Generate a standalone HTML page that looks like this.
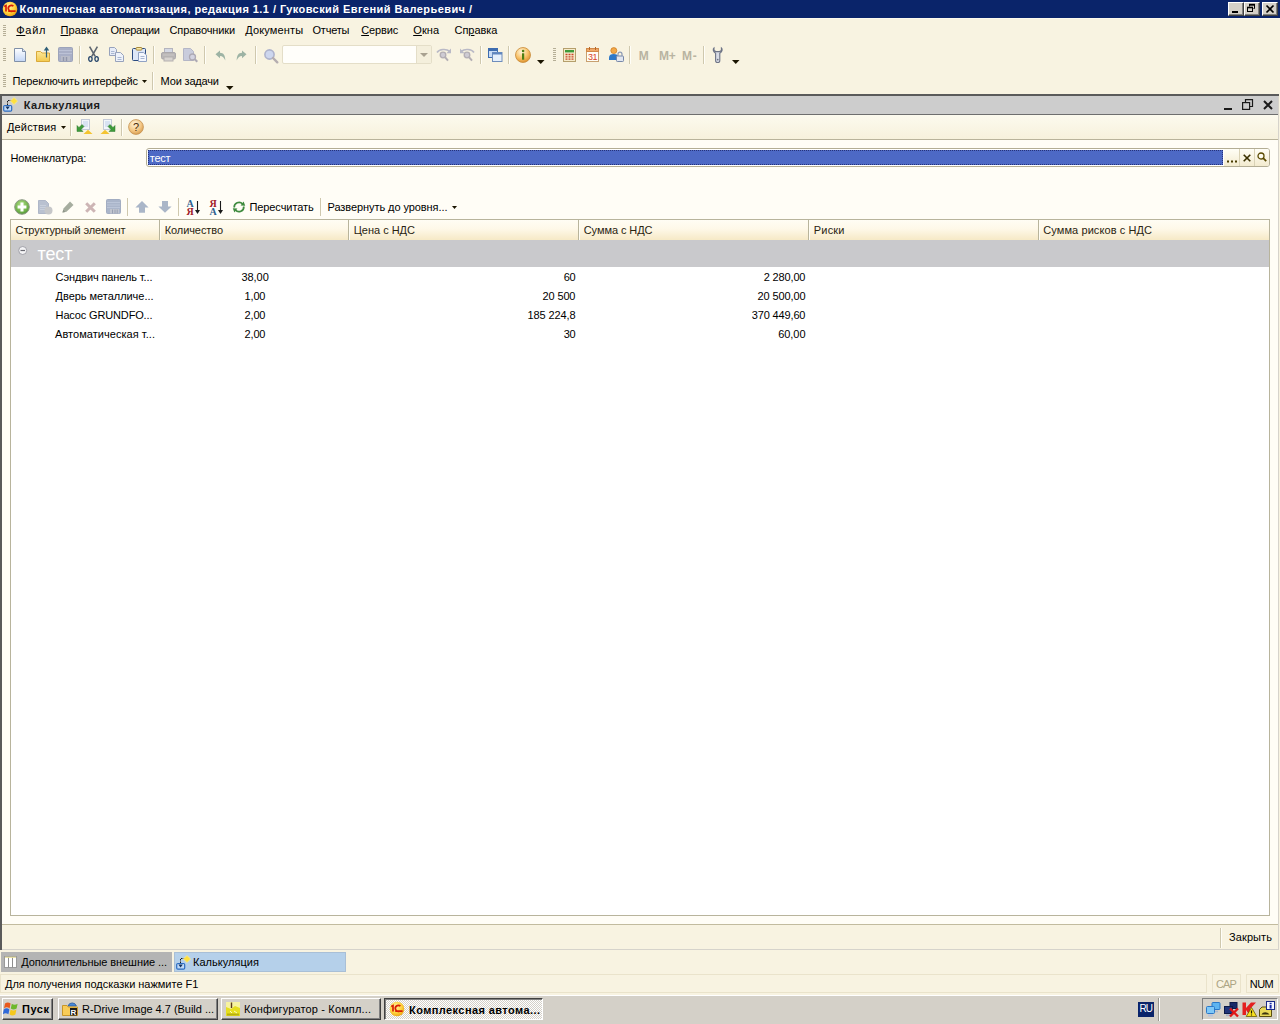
<!DOCTYPE html>
<html lang="ru">
<head>
<meta charset="utf-8">
<title>Комплексная автоматизация, редакция 1.1</title>
<style>
html,body{margin:0;padding:0;}
body{width:1280px;height:1024px;overflow:hidden;position:relative;background:#F8F3E1;
 font-family:"Liberation Sans","DejaVu Sans",sans-serif;font-size:11px;color:#000;}
.a{position:absolute;}
.t{position:absolute;white-space:nowrap;line-height:14px;height:14px;font-size:11px;}
.t u{text-decoration:underline;text-underline-offset:1px;}
.b{font-weight:bold;}
.g{font-size:18px;line-height:22px;height:22px;}
svg{position:absolute;overflow:visible;}
.wb{position:absolute;top:2px;width:16px;height:14px;background:#D4D0C8;box-sizing:border-box;
 border:1px solid;border-color:#fff #404040 #404040 #fff;box-shadow:inset -1px -1px 0 #808080;}
.grip{position:absolute;width:3px;background:repeating-linear-gradient(to bottom,#B5AE96 0,#B5AE96 1px,transparent 1px,transparent 2px);}
.sep{position:absolute;width:1px;background:#CFC8AE;box-shadow:1px 0 0 #FFFEF8;}
.tb{position:absolute;top:998px;height:22px;box-sizing:border-box;background:#D4D0C8;border:1px solid;border-color:#fff #404040 #404040 #fff;box-shadow:inset -1px -1px 0 #808080;}
.hsep{position:absolute;top:220px;width:1px;height:20px;background:#B8B49C;box-shadow:1px 0 0 #FFFDF3;}
</style>
</head>
<body>
<!-- main title bar -->
<div class="a" style="left:0;top:0;width:1280px;height:18px;background:#0A246A"></div>
<div class="a" style="left:0;top:18px;width:1280px;height:1px;background:#FCFAEE"></div>
<div class="wb" style="left:1228px"></div>
<div class="wb" style="left:1244px"></div>
<div class="wb" style="left:1262px"></div>
<!-- toolbar grips / separators -->
<div class="grip" style="left:3px;top:25px;height:12px"></div>
<div class="grip" style="left:3px;top:48px;height:13px"></div>
<div class="grip" style="left:3px;top:74px;height:13px"></div>
<div class="grip" style="left:553px;top:48px;height:13px"></div>
<div class="sep" style="left:79px;top:46px;height:18px"></div>
<div class="sep" style="left:153px;top:46px;height:18px"></div>
<div class="sep" style="left:204px;top:46px;height:18px"></div>
<div class="sep" style="left:255px;top:46px;height:18px"></div>
<div class="sep" style="left:480px;top:46px;height:18px"></div>
<div class="sep" style="left:508px;top:46px;height:18px"></div>
<div class="sep" style="left:629px;top:46px;height:18px"></div>
<div class="sep" style="left:703px;top:46px;height:18px"></div>
<div class="sep" style="left:152px;top:72px;height:18px"></div>
<!-- search combo -->
<div class="a" style="left:282px;top:45px;width:150px;height:19px;box-sizing:border-box;background:#FFFEFA;border:1px solid #E4DEC8;border-radius:2px"></div>
<div class="a" style="left:416px;top:46px;width:15px;height:17px;background:#F4EFDC;border-left:1px solid #E4DEC8;box-sizing:border-box"></div>
<!-- child window -->
<div class="a" style="left:0;top:94px;width:1279px;height:856px;background:#5A5A5A"></div>
<div class="a" style="left:2px;top:96px;width:1277px;height:854px;background:#D6D3CB"></div>
<div class="a" style="left:2px;top:96px;width:1276px;height:18px;background:#CDCDCD"></div>
<div class="a" style="left:2px;top:114px;width:1276px;height:1px;background:#6E6E6E"></div>
<div class="a" style="left:2px;top:115px;width:1276px;height:24px;background:linear-gradient(#FCFAEE,#F7F1DC)"></div>
<div class="a" style="left:2px;top:139px;width:1276px;height:1px;background:#B9B39B"></div>
<div class="a" style="left:2px;top:140px;width:1276px;height:784px;background:#FFFDF6"></div>
<div class="a" style="left:2px;top:924px;width:1276px;height:1px;background:#C2BB9E"></div>
<div class="a" style="left:2px;top:925px;width:1276px;height:24px;background:#F8F3E1"></div>
<div class="sep" style="left:70px;top:119px;height:17px"></div>
<div class="sep" style="left:121px;top:119px;height:17px"></div>
<div class="sep" style="left:1220px;top:928px;height:20px"></div>
<!-- field -->
<div class="a" style="left:146px;top:148px;width:1124px;height:19px;box-sizing:border-box;border:1px solid #B3AD94;border-radius:3px;background:#FFFFFF"></div>
<div class="a" style="left:148px;top:150px;width:1075px;height:15px;background:#4D69C5;outline:1px dotted #26327A;outline-offset:-1px"></div>
<div class="a" style="left:1224px;top:149px;width:45px;height:17px;background:linear-gradient(#FFFEF6,#F3EBCF);border-radius:0 2px 2px 0"></div>
<div class="a" style="left:1239px;top:149px;width:1px;height:17px;background:#D9D2B6"></div>
<div class="a" style="left:1254px;top:149px;width:1px;height:17px;background:#D9D2B6"></div>
<!-- table toolbar seps -->
<div class="sep" style="left:127px;top:198px;height:18px"></div>
<div class="sep" style="left:178px;top:198px;height:18px"></div>
<div class="sep" style="left:320px;top:198px;height:18px"></div>
<!-- table -->
<div class="a" style="left:10px;top:219px;width:1260px;height:697px;box-sizing:border-box;border:1px solid #B8B49C;background:#FFFFFF"></div>
<div class="a" style="left:11px;top:220px;width:1258px;height:20px;background:linear-gradient(#FFFDF4 0%,#FEF8E8 45%,#F6E9C6 100%)"></div>
<div class="hsep" style="left:159px"></div>
<div class="hsep" style="left:348px"></div>
<div class="hsep" style="left:578px"></div>
<div class="hsep" style="left:808px"></div>
<div class="hsep" style="left:1038px"></div>
<div class="a" style="left:11px;top:240px;width:1258px;height:27px;background:#C9C9CC"></div>
<!-- window tabs -->
<div class="a" style="left:1px;top:952px;width:171px;height:20px;background:#B4B4B4"></div>
<div class="a" style="left:174px;top:952px;width:172px;height:20px;background:#B5D0EA;box-sizing:border-box;border:1px solid #A9BFD6"></div>
<!-- status bar -->
<div class="a" style="left:0;top:974px;width:1207px;height:19px;box-sizing:border-box;border:1px solid #EAE3CB"></div>
<div class="a" style="left:1212px;top:974px;width:29px;height:19px;box-sizing:border-box;border:1px solid #EAE3CB"></div>
<div class="a" style="left:1246px;top:974px;width:33px;height:19px;box-sizing:border-box;border:1px solid #EAE3CB"></div>
<!-- taskbar -->
<div class="a" style="left:0;top:995px;width:1280px;height:1px;background:#FFFFFF"></div>
<div class="a" style="left:0;top:996px;width:1280px;height:28px;background:#D4D0C8"></div>
<div class="tb" style="left:2px;width:51px"></div>
<div class="tb" style="left:58px;width:160px"></div>
<div class="tb" style="left:221px;width:160px"></div>
<div class="tb" style="left:384px;width:159px;border-color:#404040 #fff #fff #404040;box-shadow:inset 1px 1px 0 #808080;background:repeating-conic-gradient(#fff 0% 25%,#D4D0C8 0% 50%) 0 0/2px 2px"></div>
<div class="a" style="left:1138px;top:1002px;width:16px;height:15px;background:#0A246A"></div>
<div class="a" style="left:1158px;top:998px;width:1px;height:23px;background:#9A9890;box-shadow:1px 0 0 #fff"></div>
<div class="a" style="left:1202px;top:998px;width:76px;height:22px;box-sizing:border-box;border:1px solid;border-color:#808080 #fff #fff #808080"></div>

<div class="t b" id="ttl" style="left:19.5px;top:2px;letter-spacing:0.439px;color:#fff;">Комплексная автоматизация, редакция 1.1 / Гуковский Евгений Валерьевич /</div>
<div class="t" id="m1" style="left:16.25px;top:23px;letter-spacing:0.729px;"><u>Ф</u>айл</div>
<div class="t" id="m2" style="left:60.5px;top:23px;letter-spacing:0.066px;"><u>П</u>равка</div>
<div class="t" id="m3" style="left:110.5px;top:23px;letter-spacing:-0.281px;">Операции</div>
<div class="t" id="m4" style="left:169.5px;top:23px;letter-spacing:-0.094px;">Справочники</div>
<div class="t" id="m5" style="left:245.2px;top:23px;letter-spacing:0.162px;">Документы</div>
<div class="t" id="m6" style="left:312.5px;top:23px;letter-spacing:-0.206px;">Отчеты</div>
<div class="t" id="m7" style="left:361.2px;top:23px;letter-spacing:-0.138px;"><u>С</u>ервис</div>
<div class="t" id="m8" style="left:413.2px;top:23px;letter-spacing:0.141px;"><u>О</u>кна</div>
<div class="t" id="m9" style="left:454.5px;top:23px;letter-spacing:-0.029px;">Сп<u>р</u>авка</div>
<div class="t" id="tb2a" style="left:12.5px;top:74px;letter-spacing:-0.101px;">Переключить интерфейс</div>
<div class="t" id="tb2b" style="left:160.6px;top:74px;letter-spacing:-0.171px;">Мои задачи</div>
<div class="t b" id="cwt1" style="left:23.75px;top:98px;letter-spacing:0.470px;color:#1c1c1c;">Калькуляция</div>
<div class="t" id="act" style="left:7px;top:120px;letter-spacing:0.150px;">Действия</div>
<div class="t" id="nom" style="left:10.5px;top:151px;letter-spacing:-0.095px;">Номенклатура:</div>
<div class="t" id="fld" style="left:149.75px;top:151px;letter-spacing:-0.243px;color:#fff;">тест</div>
<div class="t" id="rec" style="left:249.4px;top:200px;letter-spacing:-0.073px;">Пересчитать</div>
<div class="t" id="raz" style="left:327.5px;top:200px;letter-spacing:-0.074px;">Развернуть до уровня...</div>
<div class="t" id="h1" style="left:15.6px;top:223px;letter-spacing:-0.109px;color:#2a2410;">Структурный элемент</div>
<div class="t" id="h2" style="left:164.75px;top:223px;letter-spacing:-0.092px;color:#2a2410;">Количество</div>
<div class="t" id="h3" style="left:353.75px;top:223px;letter-spacing:-0.017px;color:#2a2410;">Цена с НДС</div>
<div class="t" id="h4" style="left:583.75px;top:223px;letter-spacing:-0.077px;color:#2a2410;">Сумма с НДС</div>
<div class="t" id="h5" style="left:813.75px;top:223px;letter-spacing:0.199px;color:#2a2410;">Риски</div>
<div class="t" id="h6" style="left:1043.3px;top:223px;letter-spacing:0.086px;color:#2a2410;">Сумма рисков с НДС</div>
<div class="t g" id="grp" style="left:37.5px;top:243px;letter-spacing:-0.099px;color:#fff;">тест</div>
<div class="t" id="r0a" style="left:55.6px;top:270px;letter-spacing:-0.112px;">Сэндвич панель т...</div>
<div class="t" id="r0b" style="left:241.5px;top:270px;letter-spacing:-0.070px;">38,00</div>
<div class="t" id="r0c" style="left:563.75px;top:270px;letter-spacing:-0.300px;">60</div>
<div class="t" id="r0d" style="left:763.75px;top:270px;letter-spacing:-0.154px;">2 280,00</div>
<div class="t" id="r1a" style="left:55.6px;top:289px;letter-spacing:-0.038px;">Дверь металличе...</div>
<div class="t" id="r1b" style="left:244.5px;top:289px;letter-spacing:-0.141px;">1,00</div>
<div class="t" id="r1c" style="left:542.5px;top:289px;letter-spacing:-0.131px;">20 500</div>
<div class="t" id="r1d" style="left:757.5px;top:289px;letter-spacing:-0.117px;">20 500,00</div>
<div class="t" id="r2a" style="left:55.6px;top:308px;letter-spacing:-0.149px;">Насос GRUNDFO...</div>
<div class="t" id="r2b" style="left:244.5px;top:308px;letter-spacing:-0.141px;">2,00</div>
<div class="t" id="r2c" style="left:527.5px;top:308px;letter-spacing:-0.117px;">185 224,8</div>
<div class="t" id="r2d" style="left:751.75px;top:308px;letter-spacing:-0.146px;">370 449,60</div>
<div class="t" id="r3a" style="left:55px;top:327px;letter-spacing:0.049px;">Автоматическая т...</div>
<div class="t" id="r3b" style="left:244.5px;top:327px;letter-spacing:-0.141px;">2,00</div>
<div class="t" id="r3c" style="left:563.75px;top:327px;letter-spacing:-0.300px;">30</div>
<div class="t" id="r3d" style="left:778.25px;top:327px;letter-spacing:-0.070px;">60,00</div>
<div class="t" id="cls" style="left:1229px;top:930px;letter-spacing:0.104px;">Закрыть</div>
<div class="t" id="tab1" style="left:21.25px;top:955px;letter-spacing:-0.072px;">Дополнительные внешние ...</div>
<div class="t" id="tab2" style="left:193px;top:955px;letter-spacing:0.034px;">Калькуляция</div>
<div class="t" id="sts" style="left:5px;top:977px;letter-spacing:-0.011px;">Для получения подсказки нажмите F1</div>
<div class="t" id="cap" style="left:1216px;top:977px;letter-spacing:-0.900px;color:#ADA584;">CAP</div>
<div class="t" id="num" style="left:1249.7px;top:977px;letter-spacing:-0.500px;">NUM</div>
<div class="t b" id="pusk" style="left:22px;top:1002px;letter-spacing:0.542px;">Пуск</div>
<div class="t" id="tk1" style="left:82px;top:1002px;letter-spacing:-0.024px;">R-Drive Image 4.7 (Build ...</div>
<div class="t" id="tk2" style="left:244px;top:1002px;letter-spacing:0.148px;">Конфигуратор - Компл...</div>
<div class="t b" id="tk3" style="left:409px;top:1003px;letter-spacing:0.421px;">Комплексная автома...</div>
<div class="t" id="ru" style="left:1139.5px;top:1002px;letter-spacing:-1.000px;color:#fff;font-size:10px;">RU</div>
<div class="t b" id="mm1" style="left:638.75px;top:49px;letter-spacing:0.000px;color:#B9B4A2;font-size:12px;">M</div>
<div class="t b" id="mm2" style="left:659px;top:49px;letter-spacing:-0.300px;color:#B9B4A2;font-size:12px;">M+</div>
<div class="t b" id="mm3" style="left:682px;top:49px;letter-spacing:0.750px;color:#B9B4A2;font-size:12px;">M-</div>
<svg style="left:2px;top:1px" width="16" height="16" viewBox="0 0 16 16" ><defs><radialGradient id="lg2" cx="40%" cy="35%" r="70%"><stop offset="0" stop-color="#FFF3A0"/><stop offset="0.6" stop-color="#FFD23C"/><stop offset="1" stop-color="#E8A010"/></radialGradient></defs><circle cx="8" cy="8" r="7.3" fill="url(#lg2)"/><path d="M2.2 5.6 L4 4.6 V10.6 M6.2 10.2 H13.6 M11.4 5.2 A3 3 0 1 0 10.4 10.2" fill="none" stroke="#D81E05" stroke-width="1.7"/></svg>
<svg style="left:1228px;top:2px" width="16" height="14" viewBox="0 0 16 14" ><rect x="4" y="9" width="6" height="2" fill="#000"/></svg>
<svg style="left:1244px;top:2px" width="16" height="14" viewBox="0 0 16 14" ><path d="M5.5 2.5h5v4h-1 M5.5 2.5v2 M5.5 3h5" fill="none" stroke="#000" stroke-width="1"/><rect x="3.5" y="5.5" width="5" height="4" fill="none" stroke="#000"/><path d="M3 5.5h6" stroke="#000" stroke-width="1.6"/><path d="M5 2.6h6" stroke="#000" stroke-width="1.6"/></svg>
<svg style="left:1262px;top:2px" width="16" height="14" viewBox="0 0 16 14" ><path d="M4.5 3.5l7 7M11.5 3.5l-7 7" stroke="#000" stroke-width="1.7" fill="none"/></svg>
<svg style="left:14px;top:48px" width="12" height="14" viewBox="0 0 12 14" ><defs><linearGradient id="nd" x1="0" y1="0" x2="0" y2="1"><stop offset="0" stop-color="#FFFFFF"/><stop offset="1" stop-color="#C3D6F6"/></linearGradient></defs><path d="M0.5 0.5H8.5L11.5 3.5V13.5H0.5Z" fill="url(#nd)" stroke="#8090A8"/><path d="M8.5 0.5V3.5H11.5" fill="#DCE6F5" stroke="#8090A8"/></svg>
<svg style="left:36px;top:46px" width="15" height="16" viewBox="0 0 15 16" ><defs><linearGradient id="fo" x1="0" y1="0" x2="0" y2="1"><stop offset="0" stop-color="#FCE89A"/><stop offset="1" stop-color="#F3C94E"/></linearGradient></defs><path d="M0.5 5.5H4.5L6 7H13.5V15.5H0.5Z" fill="url(#fo)" stroke="#D9A93A"/><path d="M10.5 11.5V2.5" stroke="#2F5E78" stroke-width="1.2"/><path d="M7.8 4.4L10.5 0.6L13.2 4.4Z" fill="#2F5E78"/></svg>
<svg style="left:58px;top:47px" width="15" height="15" viewBox="0 0 15 15" ><rect x="0.5" y="0.5" width="14" height="14" rx="1" fill="#A9AFC6" stroke="#9CA3BA"/><path d="M1 3.5h13M1 6.5h13" stroke="#BCC2D6"/><rect x="3" y="9" width="9" height="5" fill="#B9BCC8"/><path d="M5.5 10v4M8.5 10v4" stroke="#9297AA" stroke-width="1.4"/></svg>
<svg style="left:88px;top:46px" width="11" height="16" viewBox="0 0 11 16" ><path d="M1.6 0.6L7.2 10.4M9.4 0.6L3.8 10.4" stroke="#5E6670" stroke-width="1.6" fill="none"/><ellipse cx="2.4" cy="13" rx="1.7" ry="2.3" fill="none" stroke="#24446A" stroke-width="1.3"/><ellipse cx="8.6" cy="13" rx="1.7" ry="2.3" fill="none" stroke="#24446A" stroke-width="1.3"/></svg>
<svg style="left:109px;top:47px" width="15" height="15" viewBox="0 0 15 15" ><path d="M0.5 0.5H5.5L7.5 2.5V8.5H0.5Z" fill="#E7ECF7" stroke="#97A2BC"/><path d="M6.5 5.5H11.5L14.5 8.5V14.5H6.5Z" fill="#EEF2FA" stroke="#97A2BC"/><path d="M8.5 10.5h4M8.5 12.5h4M2 4.5h3.5M2 6.5h3.5" stroke="#A9B7D2"/></svg>
<svg style="left:132px;top:47px" width="15" height="15" viewBox="0 0 15 15" ><rect x="0.5" y="1.5" width="13" height="12" rx="1" fill="#DDE7F7" stroke="#2A4A80"/><rect x="4" y="0.5" width="6" height="2.6" rx="1" fill="#F6E7A8" stroke="#A98A3C"/><path d="M6.5 5.5H11.5L14.5 8V14.5H6.5Z" fill="#F4F7FD" stroke="#90A2C4"/><path d="M8.5 9.5h4M8.5 11.5h4" stroke="#A9B7D2"/></svg>
<svg style="left:161px;top:48px" width="15" height="14" viewBox="0 0 15 14" ><rect x="3.5" y="0.5" width="8" height="5" fill="#D4D8E4" stroke="#B4B4BE"/><rect x="0.5" y="4.5" width="14" height="6.5" rx="1.5" fill="#B9B6B6" stroke="#ABA8AC"/><rect x="3" y="9" width="9" height="4" fill="#D7D3D0" stroke="#B4B0B0"/><path d="M2 7h11" stroke="#CAC6C6"/></svg>
<svg style="left:183px;top:48px" width="15" height="15" viewBox="0 0 15 15" ><path d="M0.5 0.5H7.5L10.5 3.5V12.5H0.5Z" fill="#C9CCDC" stroke="#B4B6C6"/><circle cx="9.5" cy="9" r="3" fill="#D2D2E0" stroke="#ADA9B4" stroke-width="1.3"/><path d="M11.8 11.2L14.3 13.8" stroke="#ADA9B4" stroke-width="2"/></svg>
<svg style="left:215px;top:50px" width="11" height="11" viewBox="0 0 11 11" ><path d="M0.5 4.2L5 0.4V2.8C8.5 2.8 10.3 5.5 10.3 10.6C9.2 7.8 7.6 6 5 6V8.2Z" fill="#9DB3A4"/></svg>
<svg style="left:235.5px;top:50px" width="11" height="11" viewBox="0 0 11 11" ><path d="M10.5 4.2L6 0.4V2.8C2.5 2.8 0.7 5.5 0.7 10.6C1.8 7.8 3.4 6 6 6V8.2Z" fill="#9DB3A4"/></svg>
<svg style="left:263px;top:48px" width="16" height="16" viewBox="0 0 16 16" ><circle cx="6.5" cy="6.5" r="4.6" fill="#CDD6EE" stroke="#AEB3CC" stroke-width="1.6"/><path d="M10 10L14.3 14.3" stroke="#B5ADB0" stroke-width="2.4" stroke-linecap="round"/></svg>
<svg style="left:420px;top:53px" width="8" height="4" viewBox="0 0 8 4" ><path d="M0 0H8L4.0 4Z" fill="#A8A190"/></svg>
<svg style="left:436px;top:48px" width="16" height="14" viewBox="0 0 16 14" ><path d="M1 4.5C3.5 0.8 10.5 0.6 13.5 3.2" fill="none" stroke="#B9B9C6" stroke-width="1.6"/><path d="M15 0.6V5.2H10.4Z" fill="#B9B9C6"/><circle cx="7" cy="7" r="2.8" fill="#CECBD3" stroke="#B3AEB4" stroke-width="1.3"/><path d="M9 9.2L12 12.6" stroke="#B3AEB4" stroke-width="2"/></svg>
<svg style="left:459px;top:48px" width="16" height="14" viewBox="0 0 16 14" ><path d="M15 4.5C12.5 0.8 5.5 0.6 2.5 3.2" fill="none" stroke="#B9B9C6" stroke-width="1.6"/><path d="M1 0.6V5.2H5.6Z" fill="#B9B9C6"/><circle cx="8" cy="7" r="2.8" fill="#CECBD3" stroke="#B3AEB4" stroke-width="1.3"/><path d="M10 9.2L13 12.6" stroke="#B3AEB4" stroke-width="2"/></svg>
<svg style="left:488px;top:48px" width="15" height="14" viewBox="0 0 15 14" ><rect x="0.5" y="0.5" width="9" height="9" fill="#C9DCF5" stroke="#3E6DB0"/><rect x="0.5" y="0.5" width="9" height="2.5" fill="#3E6DB0"/><rect x="4.5" y="4.5" width="9.5" height="9" fill="#E5EFFB" stroke="#6E8DBC"/><rect x="4.5" y="4.5" width="9.5" height="2" fill="#5E86C0"/></svg>
<svg style="left:515px;top:47px" width="16" height="16" viewBox="0 0 16 16" ><defs><radialGradient id="ig" cx="40%" cy="30%" r="75%"><stop offset="0" stop-color="#FFF6DC"/><stop offset="0.55" stop-color="#F9C36A"/><stop offset="1" stop-color="#D98C28"/></radialGradient></defs><circle cx="8" cy="8" r="7.5" fill="url(#ig)" stroke="#C88A38" stroke-width="0.8"/><rect x="7" y="6.3" width="2.2" height="6.4" fill="#4D7F14"/><circle cx="8.1" cy="4" r="1.3" fill="#4D7F14"/></svg>
<svg style="left:537px;top:60px" width="7.5" height="4" viewBox="0 0 7.5 4" ><path d="M0 0H7.5L3.75 4Z" fill="#1A1400"/></svg>
<svg style="left:563px;top:48px" width="13" height="14" viewBox="0 0 13 14" ><rect x="0.5" y="0.5" width="12" height="13" fill="#F6EBCB" stroke="#B59F6C"/><rect x="2" y="2" width="9" height="2.4" fill="#3E9A3A"/><path d="M2.5 6.5h2M5.5 6.5h2M8.5 6.5h2M2.5 8.8h2M5.5 8.8h2M8.5 8.8h2M2.5 11.1h2M5.5 11.1h2M8.5 11.1h2" stroke="#C8452A" stroke-width="1.3"/></svg>
<svg style="left:586px;top:47px" width="13" height="15" viewBox="0 0 13 15" ><rect x="0.5" y="1.5" width="12" height="13" fill="#FFFDF6" stroke="#C8A070"/><rect x="0.5" y="1.5" width="12" height="3" fill="#F0A868" stroke="#D08848"/><path d="M3.5 0v3M9.5 0v3" stroke="#B86828"/><text x="6.6" y="13" font-family="Liberation Sans,sans-serif" font-size="9" fill="#D8402A" text-anchor="middle" letter-spacing="-0.3">31</text></svg>
<svg style="left:609px;top:47px" width="15" height="15" viewBox="0 0 15 15" ><circle cx="4.8" cy="3.6" r="3" fill="#F2A848" stroke="#C87820" stroke-width="0.7"/><path d="M0 13V10.5C0 8 2 7 4.8 7C7 7 8.5 7.8 9 9V13Z" fill="#2E78C8"/><rect x="7.5" y="9" width="7" height="5.5" rx="0.8" fill="#E1E6F0" stroke="#7888A8"/><path d="M9 9V7.2A2 2 0 0 1 13 7.2V9" fill="none" stroke="#8A98B4" stroke-width="1.2"/></svg>
<svg style="left:712px;top:47px" width="12" height="16" viewBox="0 0 12 16" ><path d="M2 0.8C0.8 1.8 0.8 4.6 3.6 6.2V13.4A2 2 0 0 0 7.8 13.4V6.2C10.6 4.6 10.6 1.8 9.4 0.8V3.6L7.6 4.6H3.8L2 3.6Z" fill="#D9DCE6" stroke="#6E7486" stroke-width="1.1"/><circle cx="5.7" cy="12.6" r="0.9" fill="#6E7486"/></svg>
<svg style="left:732px;top:60px" width="7.5" height="4" viewBox="0 0 7.5 4" ><path d="M0 0H7.5L3.75 4Z" fill="#1A1400"/></svg>
<svg style="left:142px;top:80px" width="5" height="3" viewBox="0 0 5 3" ><path d="M0 0H5L2.5 3Z" fill="#1A1400"/></svg>
<svg style="left:226px;top:86px" width="7.5" height="4" viewBox="0 0 7.5 4" ><path d="M0 0H7.5L3.75 4Z" fill="#1A1400"/></svg>
<svg style="left:3px;top:97px" width="15" height="15" viewBox="0 0 15 15" ><path d="M4.5 8V3.5H9" fill="none" stroke="#1A1A1A" stroke-width="1" stroke-dasharray="1.5 1"/><rect x="0.7" y="8.5" width="8" height="5.6" rx="1.2" fill="#BFD9F7" stroke="#2C6CC0" stroke-width="1.2"/><path d="M2.4 9.6H6.8L4.6 12.4Z" fill="#10305E"/><path d="M11 0.5L14.6 4L11 7.6L7.4 4Z" fill="#FFE03C" stroke="#F2E9A0" stroke-width="0.8"/></svg>
<svg style="left:1224px;top:98px" width="10" height="13" viewBox="0 0 10 13" ><rect x="0" y="10" width="8" height="2" fill="#1A1A1A"/></svg>
<svg style="left:1242px;top:99px" width="12" height="12" viewBox="0 0 12 12" ><path d="M3.5 3V0.7H10.5V7.5H8" fill="none" stroke="#1A1A1A" stroke-width="1.2"/><rect x="0.6" y="3.6" width="7" height="6.8" fill="none" stroke="#1A1A1A" stroke-width="1.2"/></svg>
<svg style="left:1263px;top:100px" width="10" height="10" viewBox="0 0 10 10" ><path d="M1 1L9 9M9 1L1 9" stroke="#1A1A1A" stroke-width="2" fill="none"/></svg>
<svg style="left:60.5px;top:126px" width="5" height="3" viewBox="0 0 5 3" ><path d="M0 0H5L2.5 3Z" fill="#1A1400"/></svg>
<svg style="left:76px;top:119px" width="17" height="16" viewBox="0 0 17 16" ><rect x="5.5" y="0.5" width="8" height="10" fill="#F2F5FA" stroke="#C5CBD8"/><path d="M7 3h5M7 5h5M7 7h5" stroke="#BFD0EA"/><path d="M1 12.5V6.5L3 8.5L6 5.5L8 7.5L5 10.5L7 12.5Z" fill="#3E9A3A" stroke="#2E7A2E" stroke-width="0.5"/><path d="M7.5 15L12 10.8L16.5 15Z" fill="#F4C430"/></svg>
<svg style="left:100px;top:119px" width="17" height="16" viewBox="0 0 17 16" ><rect x="3.5" y="0.5" width="8" height="10" fill="#F2F5FA" stroke="#C5CBD8"/><path d="M5 3h5M5 5h5M5 7h5" stroke="#BFD0EA"/><path d="M15 12.5V6.5L13 8.5L10 5.5L8 7.5L11 10.5L9 12.5Z" fill="#3E9A3A" stroke="#2E7A2E" stroke-width="0.5"/><path d="M0.5 15L5 10.8L9.5 15Z" fill="#F4C430"/></svg>
<svg style="left:128px;top:119px" width="16" height="16" viewBox="0 0 16 16" ><defs><radialGradient id="hg" cx="40%" cy="30%" r="75%"><stop offset="0" stop-color="#FFF4DA"/><stop offset="0.6" stop-color="#F4C784"/><stop offset="1" stop-color="#D69A4C"/></radialGradient></defs><circle cx="8" cy="8" r="7.4" fill="url(#hg)" stroke="#C49050" stroke-width="0.8"/><text x="8" y="12" font-family="Liberation Sans,sans-serif" font-size="11" text-anchor="middle" fill="#4A2A08">?</text></svg>
<svg style="left:1227px;top:160px" width="11" height="3" viewBox="0 0 11 3" ><rect x="0" y="0.5" width="2" height="2" fill="#4A3C00"/><rect x="4" y="0.5" width="2" height="2" fill="#4A3C00"/><rect x="8" y="0.5" width="2" height="2" fill="#4A3C00"/></svg>
<svg style="left:1243px;top:154px" width="8" height="8" viewBox="0 0 8 8" ><path d="M0.7 0.7L7.3 7.3M7.3 0.7L0.7 7.3" stroke="#3A3000" stroke-width="1.6" fill="none"/></svg>
<svg style="left:1257px;top:152px" width="10" height="10" viewBox="0 0 10 10" ><circle cx="4" cy="4" r="3" fill="#FFFDF0" stroke="#5A4A00" stroke-width="1.3"/><path d="M6.2 6.2L9.2 9.2" stroke="#5A4A00" stroke-width="1.8"/></svg>
<svg style="left:14px;top:199px" width="16" height="16" viewBox="0 0 16 16" ><defs><radialGradient id="ag" cx="45%" cy="35%" r="70%"><stop offset="0" stop-color="#B4E08A"/><stop offset="0.7" stop-color="#6DB048"/><stop offset="1" stop-color="#4C8C34"/></radialGradient></defs><circle cx="8" cy="8" r="7.3" fill="url(#ag)" stroke="#8E9A86" stroke-width="1"/><path d="M8 3.6V12.4M3.6 8H12.4" stroke="#FFFFFF" stroke-width="3"/></svg>
<svg style="left:38px;top:200px" width="15" height="15" viewBox="0 0 15 15" ><path d="M0.5 0.5H7.5L10.5 3.5V13.5H0.5Z" fill="#B9C1D0" stroke="#AFB7C8"/><path d="M2 5.5h6M2 7.5h6M2 9.5h6" stroke="#C9D0DC"/><circle cx="10.5" cy="10.5" r="4" fill="#C6C7C9"/></svg>
<svg style="left:62px;top:201px" width="12" height="12" viewBox="0 0 12 12" ><path d="M8 0.5L11.5 4L4.5 10.8L0.5 11.6L1.5 7.4Z" fill="#A6AD9F"/><path d="M0.5 11.6L1.2 8.8L3.4 10.9Z" fill="#8E9488"/></svg>
<svg style="left:85px;top:202px" width="11" height="11" viewBox="0 0 11 11" ><path d="M1.2 1.2L9.8 9.8M9.8 1.2L1.2 9.8" stroke="#CDB5B5" stroke-width="3" fill="none"/></svg>
<svg style="left:106px;top:199px" width="15" height="15" viewBox="0 0 15 15" ><rect x="0.5" y="0.5" width="14" height="14" rx="1" fill="#AAB5CA" stroke="#A2ADC2"/><path d="M1 3.5h13M1 6h13M1 8.5h13" stroke="#BBC5D8"/><rect x="4" y="10" width="9" height="4.5" fill="#C0C4CE"/><path d="M6.5 10.5v4M9 10.5v4M11.2 10.5v4" stroke="#98A0B2" stroke-width="1"/></svg>
<svg style="left:134.5px;top:201px" width="14" height="12" viewBox="0 0 14 12" ><path d="M7 0L13.6 6.4H10V11.8H4V6.4H0.4Z" fill="#AAB6C8"/></svg>
<svg style="left:157.8px;top:201px" width="14" height="12" viewBox="0 0 14 12" ><path d="M7 11.8L13.6 5.4H10V0H4V5.4H0.4Z" fill="#AAB6C8"/></svg>
<svg style="left:186px;top:199px" width="15" height="16" viewBox="0 0 15 16" ><text x="4" y="7.6" font-family="Liberation Serif,serif" font-weight="bold" font-size="10" text-anchor="middle" fill="#2E6090">А</text><text x="4" y="15.6" font-family="Liberation Serif,serif" font-weight="bold" font-size="10" text-anchor="middle" fill="#A01828">Я</text><path d="M11.5 2V13" stroke="#1A1A1A" stroke-width="1.1"/><path d="M9 11H14L11.5 15Z" fill="#1A1A1A"/></svg>
<svg style="left:209px;top:199px" width="15" height="16" viewBox="0 0 15 16" ><text x="4" y="7.6" font-family="Liberation Serif,serif" font-weight="bold" font-size="10" text-anchor="middle" fill="#A01828">Я</text><text x="4" y="15.6" font-family="Liberation Serif,serif" font-weight="bold" font-size="10" text-anchor="middle" fill="#2E6090">А</text><path d="M11.5 2V13" stroke="#1A1A1A" stroke-width="1.1"/><path d="M9 11H14L11.5 15Z" fill="#1A1A1A"/></svg>
<svg style="left:232px;top:201px" width="14" height="12" viewBox="0 0 14 12" ><path d="M2.2 6.5A4.8 4.8 0 0 1 10.6 3" fill="none" stroke="#3E8A3E" stroke-width="1.7"/><path d="M8.6 4.6L13.2 4.8L11.6 0.6Z" fill="#3E8A3E"/><path d="M11.8 5.5A4.8 4.8 0 0 1 3.4 9" fill="none" stroke="#3E8A3E" stroke-width="1.7"/><path d="M5.4 7.4L0.8 7.2L2.4 11.4Z" fill="#3E8A3E"/></svg>
<svg style="left:452px;top:206px" width="5" height="3" viewBox="0 0 5 3" ><path d="M0 0H5L2.5 3Z" fill="#1A1400"/></svg>
<svg style="left:18px;top:246px" width="10" height="10" viewBox="0 0 10 10" ><circle cx="4.7" cy="4.5" r="4" fill="#F4F4F6" stroke="#9A9AA2" stroke-width="0.9"/><path d="M2.5 4.5H7" stroke="#6A6A72" stroke-width="1.2"/></svg>
<svg style="left:4px;top:956px" width="13" height="12" viewBox="0 0 13 12" ><rect x="0.5" y="0.5" width="12" height="11" fill="#FFFFFF" stroke="#9A9A9A"/><path d="M4.5 0.5V11.5M8.5 0.5V11.5" stroke="#8E8E8E"/><path d="M1 1.3h11" stroke="#E8DFA0" stroke-width="1.2"/></svg>
<svg style="left:176px;top:955px" width="15" height="15" viewBox="0 0 15 15" ><path d="M4.5 8V3.5H9" fill="none" stroke="#1A1A1A" stroke-width="1" stroke-dasharray="1.5 1"/><rect x="0.7" y="8.5" width="8" height="5.6" rx="1.2" fill="#BFD9F7" stroke="#2C6CC0" stroke-width="1.2"/><path d="M2.4 9.6H6.8L4.6 12.4Z" fill="#10305E"/><path d="M11 0.5L14.6 4L11 7.6L7.4 4Z" fill="#FFE03C" stroke="#F2E9A0" stroke-width="0.8"/></svg>
<svg style="left:4px;top:1001px" width="15" height="14" viewBox="0 0 15 14" ><path d="M1 2.6C3 1 5 1.4 6.6 2.6L5.6 7.4C4 6.2 2 5.8 0 7.4Z" fill="#E8581C"/><path d="M7.8 2.8C9.4 4 11.4 4.2 13.6 2.8L12.6 7.6C10.4 9 8.4 8.8 6.8 7.6Z" fill="#6DB82C"/><path d="M-0.2 8.4C1.8 6.8 3.8 7.2 5.4 8.4L4.4 13.2C2.8 12 0.8 11.6 -1.2 13.2Z" fill="#2E68D8"/><path d="M6.6 8.6C8.2 9.8 10.2 10 12.4 8.6L11.4 13.4C9.2 14.8 7.2 14.6 5.6 13.4Z" fill="#F4C81C"/></svg>
<svg style="left:62px;top:1000px" width="16" height="16" viewBox="0 0 16 16" ><path d="M6 6A4.4 4.4 0 0 1 14.4 6Z" fill="#4A8AD8" stroke="#2A5AA0" stroke-width="0.8"/><path d="M0.5 5.5H5L6.2 7H15.5V15.5H0.5Z" fill="#F8CC58" stroke="#C89628"/><rect x="8" y="8" width="7" height="7.5" fill="#1A1A1A"/><text x="11.5" y="14.6" font-family="Liberation Sans,sans-serif" font-weight="bold" font-size="8" text-anchor="middle" fill="#FFFFFF">R</text></svg>
<svg style="left:226px;top:1002px" width="14" height="14" viewBox="0 0 14 14" ><rect x="0" y="0" width="14" height="14" fill="#E6DE1E"/><path d="M0 0H14V6L9 4L5 7L0 5Z" fill="#F6F2A0"/><path d="M5.5 0.5V6" stroke="#5A3A1A" stroke-width="1.4"/><path d="M1 12.5H13" stroke="#B8B010" stroke-width="2"/><path d="M4 9l2 2M8 9l3 2" stroke="#FAF8C0" stroke-width="1"/></svg>
<svg style="left:389px;top:1001px" width="16" height="16" viewBox="0 0 16 16" ><defs><radialGradient id="lg389" cx="40%" cy="35%" r="70%"><stop offset="0" stop-color="#FFF3A0"/><stop offset="0.6" stop-color="#FFD23C"/><stop offset="1" stop-color="#E8A010"/></radialGradient></defs><circle cx="8" cy="8" r="7.3" fill="url(#lg389)"/><path d="M2.2 5.6 L4 4.6 V10.6 M6.2 10.2 H13.6 M11.4 5.2 A3 3 0 1 0 10.4 10.2" fill="none" stroke="#D81E05" stroke-width="1.7"/></svg>
<svg style="left:1206px;top:1002px" width="15" height="15" viewBox="0 0 15 15" ><rect x="6" y="0.5" width="8" height="7" rx="1" fill="#5EB4F0" stroke="#2A78C8"/><path d="M8 9.5h4" stroke="#A8B8D0" stroke-width="1.6"/><rect x="0.5" y="4.5" width="8" height="7" rx="1" fill="#7EC8F8" stroke="#2A78C8"/><path d="M2 13.5h5" stroke="#B8C4DC" stroke-width="2"/></svg>
<svg style="left:1224px;top:1002px" width="15" height="15" viewBox="0 0 15 15" ><rect x="6" y="0.5" width="7" height="6" fill="#182A68" stroke="#0C1A48"/><rect x="0.5" y="4.5" width="8" height="7" fill="#20347A" stroke="#0C1A48"/><path d="M2 13.2h5" stroke="#A8B0C8" stroke-width="1.8"/><path d="M6 6.5L14 14.5M14 6.5L6 14.5" stroke="#E01818" stroke-width="2.4"/></svg>
<svg style="left:1242px;top:1002px" width="15" height="15" viewBox="0 0 15 15" ><path d="M0.5 0.5H4V6L9 0.5H14L8 7L11 11H6L4 8V13H0.5Z" fill="#E42020"/><path d="M9.5 5.5L14.8 14.5H4.2Z" fill="#F8E020" stroke="#6A5A00" stroke-width="0.8"/><path d="M9.5 8.6V11.6M9.5 12.5V13.6" stroke="#1A1A00" stroke-width="1.2"/></svg>
<svg style="left:1259px;top:1001px" width="16" height="16" viewBox="0 0 16 16" ><path d="M0.5 8.5L3 6H10L12.5 8.5V15.5H0.5Z" fill="#E8D858" stroke="#5A4E10"/><path d="M2.5 13.5C4 10.5 8 10.5 10.5 13.5Z" fill="#3A3410"/><rect x="7.5" y="0.5" width="8" height="8" fill="#F4F6FF" stroke="#1A2A88"/><rect x="10.6" y="4" width="2" height="3.6" fill="#1A2AA8"/><rect x="10.6" y="1.8" width="2" height="1.5" fill="#1A2AA8"/></svg>
</body>
</html>
